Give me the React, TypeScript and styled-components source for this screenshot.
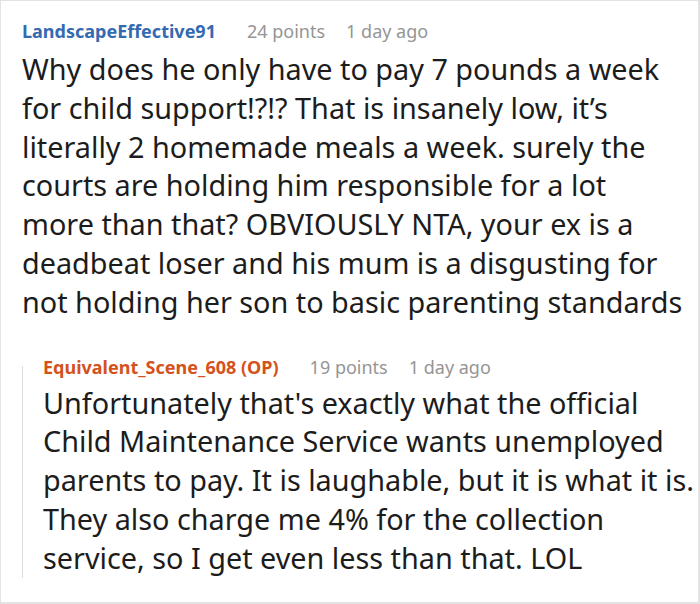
import React from "react";
import styled, { createGlobalStyle } from "styled-components";

const Global = createGlobalStyle`
  html, body { margin: 0; padding: 0; background: #fff; }
  body { font-family: "Noto Sans", "Open Sans", sans-serif; }
`;

const Frame = styled.div`
  box-sizing: border-box;
  width: 700px;
  height: 604px;
  border: 1px solid #e3e3e3;
  border-right-width: 2px;
  border-bottom-width: 2px;
  padding: 17px 0 0 21px;
  overflow: hidden;
`;

const Comment = styled.div`
  display: flex;
  flex-direction: column;
`;

/* nested reply with its thread guide line on the left */
const Reply = styled.div`
  position: relative;
  margin-top: 32px;
  padding-left: 21px;

  &::before {
    content: "";
    position: absolute;
    left: 0;
    top: 12px;
    bottom: 0;
    width: 1px;
    background: #dcdcdc;
  }
`;

const Meta = styled.div`
  display: flex;
  align-items: baseline;
  gap: 21px;
  font-size: 18px;
  line-height: 26px;
  white-space: nowrap;
`;

const Author = styled.span<{ $op?: boolean }>`
  font-weight: 700;
  color: ${(p) => (p.$op ? "#d4521c" : "#336ab2")};
  margin-right: 10px;
`;

const Stat = styled.span`
  color: #959595;
`;

const Body = styled.p<{ $gap: number }>`
  margin: ${(p) => p.$gap}px 0 0;
  font-size: 28.8px;
  line-height: 38.8px;
  color: #1c1c1c;
`;

const Line = styled.span`
  display: block;
  white-space: nowrap;
`;

type Data = {
  author: string;
  op?: boolean;
  points: string;
  age: string;
  gap: number;
  lines: string[];
};

const first: Data = {
  author: "LandscapeEffective91",
  points: "24 points",
  age: "1 day ago",
  gap: 6,
  lines: [
    "Why does he only have to pay 7 pounds a week",
    "for child support!?!? That is insanely low, it\u2019s",
    "literally 2 homemade meals a week. surely the",
    "courts are holding him responsible for a lot",
    "more than that? OBVIOUSLY NTA, your ex is a",
    "deadbeat loser and his mum is a disgusting for",
    "not holding her son to basic parenting standards",
  ],
};

const second: Data = {
  author: "Equivalent_Scene_608 (OP)",
  op: true,
  points: "19 points",
  age: "1 day ago",
  gap: 4,
  lines: [
    "Unfortunately that's exactly what the official",
    "Child Maintenance Service wants unemployed",
    "parents to pay. It is laughable, but it is what it is.",
    "They also charge me 4% for the collection",
    "service, so I get even less than that. LOL",
  ],
};

function Entry({ d }: { d: Data }) {
  return (
    <Comment>
      <Meta>
        <Author $op={d.op}>{d.author}</Author>
        <Stat>{d.points}</Stat>
        <Stat>{d.age}</Stat>
      </Meta>
      <Body $gap={d.gap}>
        {d.lines.map((l, i) => (
          <Line key={i}>{l}</Line>
        ))}
      </Body>
    </Comment>
  );
}

export default function App() {
  return (
    <>
      <Global />
      <Frame>
        <Entry d={first} />
        <Reply>
          <Entry d={second} />
        </Reply>
      </Frame>
    </>
  );
}
